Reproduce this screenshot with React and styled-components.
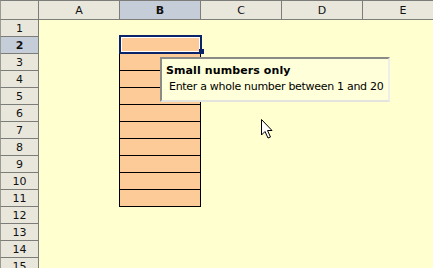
import React from "react";
import styled, { createGlobalStyle } from "styled-components";

const Global = createGlobalStyle`
  html, body { margin: 0; padding: 0; }
  body {
    width: 433px;
    height: 268px;
    overflow: hidden;
    background: #ffffcf;
    font-family: "DejaVu Sans", Verdana, sans-serif;
  }
`;

const COLS = ["A", "B", "C", "D", "E"];
const ROWS = Array.from({ length: 15 }, (_, i) => i + 1);

const Sheet = styled.div`
  position: relative;
  width: 433px;
  height: 268px;
  overflow: hidden;
  display: grid;
  grid-template-columns: 39px repeat(5, 81px);
  grid-template-rows: 20px repeat(15, 17px);
  background: #ffffcf;
`;

const Corner = styled.div`
  box-sizing: border-box;
  background: #e9e7dc;
  border-top: 1px solid #7c7c78;
  border-left: 1px solid #9a9a94;
  border-right: 1px solid #7c7c78;
  border-bottom: 1px solid #7c7c78;
`;

const ColHead = styled.div`
  box-sizing: border-box;
  display: flex;
  align-items: center;
  justify-content: center;
  background: ${(p) => (p.$active ? "#c5ced8" : "#e9e7dc")};
  border-top: 1px solid #7c7c78;
  border-right: 1px solid #7c7c78;
  border-bottom: 1px solid #7c7c78;
  font-size: 11px;
  font-weight: ${(p) => (p.$active ? "bold" : "normal")};
  color: #111;
`;

const RowHead = styled.div`
  box-sizing: border-box;
  display: flex;
  align-items: center;
  justify-content: center;
  background: ${(p) => (p.$active ? "#c5ced8" : "#e9e7dc")};
  border-left: 1px solid #9a9a94;
  border-right: 1px solid #7c7c78;
  border-bottom: 1px solid #7c7c78;
  font-size: 11px;
  font-weight: ${(p) => (p.$active ? "bold" : "normal")};
  color: #111;
`;

const Cell = styled.div`
  box-sizing: border-box;
  position: relative;
  background: ${(p) => (p.$filled ? "#fdcb98" : "transparent")};
  ${(p) =>
    p.$filled
      ? `
    margin-left: -1px;
    border-left: 1px solid #000;
    border-right: 1px solid #000;
    border-bottom: 1px solid #000;
  `
      : ""}
`;

const SelectionFrame = styled.div`
  position: absolute;
  left: -1px;
  right: -2px;
  top: -2px;
  bottom: -1px;
  border: 2px solid #0a246a;
  box-shadow: inset 0 0 0 1px #ffffff;
  pointer-events: none;
`;

const FillHandle = styled.div`
  position: absolute;
  right: -4px;
  bottom: -2px;
  width: 5px;
  height: 5px;
  background: #0a246a;
`;

const Tooltip = styled.div`
  position: absolute;
  left: 160px;
  top: 57px;
  width: 230px;
  height: 45px;
  box-sizing: border-box;
  background: #ffffd9;
  border: 2px solid;
  border-color: #8a8a86 #eeeeea #e4e4de #8a8a86;
  padding: 5px 4px 0 4px;
  display: flex;
  flex-direction: column;
  gap: 3px;
  color: #000;
`;

const TipTitle = styled.div`
  font-size: 11px;
  line-height: 13px;
  font-weight: bold;
  letter-spacing: 0.1px;
`;

const TipText = styled.div`
  font-size: 11px;
  line-height: 13px;
  padding-left: 3px;
  letter-spacing: -0.3px;
  white-space: nowrap;
`;

const Cursor = styled.svg`
  position: absolute;
  left: 260px;
  top: 118px;
`;

export default function App() {
  return (
    <>
      <Global />
      <Sheet>
        <Corner />
        {COLS.map((c) => (
          <ColHead key={c} $active={c === "B"}>
            {c}
          </ColHead>
        ))}
        {ROWS.map((r) => (
          <React.Fragment key={r}>
            <RowHead $active={r === 2}>{r}</RowHead>
            {COLS.map((c) => {
              const filled = c === "B" && r >= 2 && r <= 11;
              const selected = c === "B" && r === 2;
              return (
                <Cell key={c} $filled={filled}>
                  {selected && (
                    <SelectionFrame>
                      <FillHandle />
                    </SelectionFrame>
                  )}
                </Cell>
              );
            })}
          </React.Fragment>
        ))}
        <Tooltip>
          <TipTitle>Small numbers only</TipTitle>
          <TipText>Enter a whole number between 1 and 20</TipText>
        </Tooltip>
        <Cursor width="14" height="22" viewBox="0 0 14 22">
          <path
            d="M1.5 1.5 L1.5 17 L5 13.5 L8 20 L10.5 19 L7.5 12.5 L12 12.5 Z"
            fill="#fff"
            stroke="#000"
            strokeWidth="1"
            strokeLinejoin="miter"
          />
        </Cursor>
      </Sheet>
    </>
  );
}
